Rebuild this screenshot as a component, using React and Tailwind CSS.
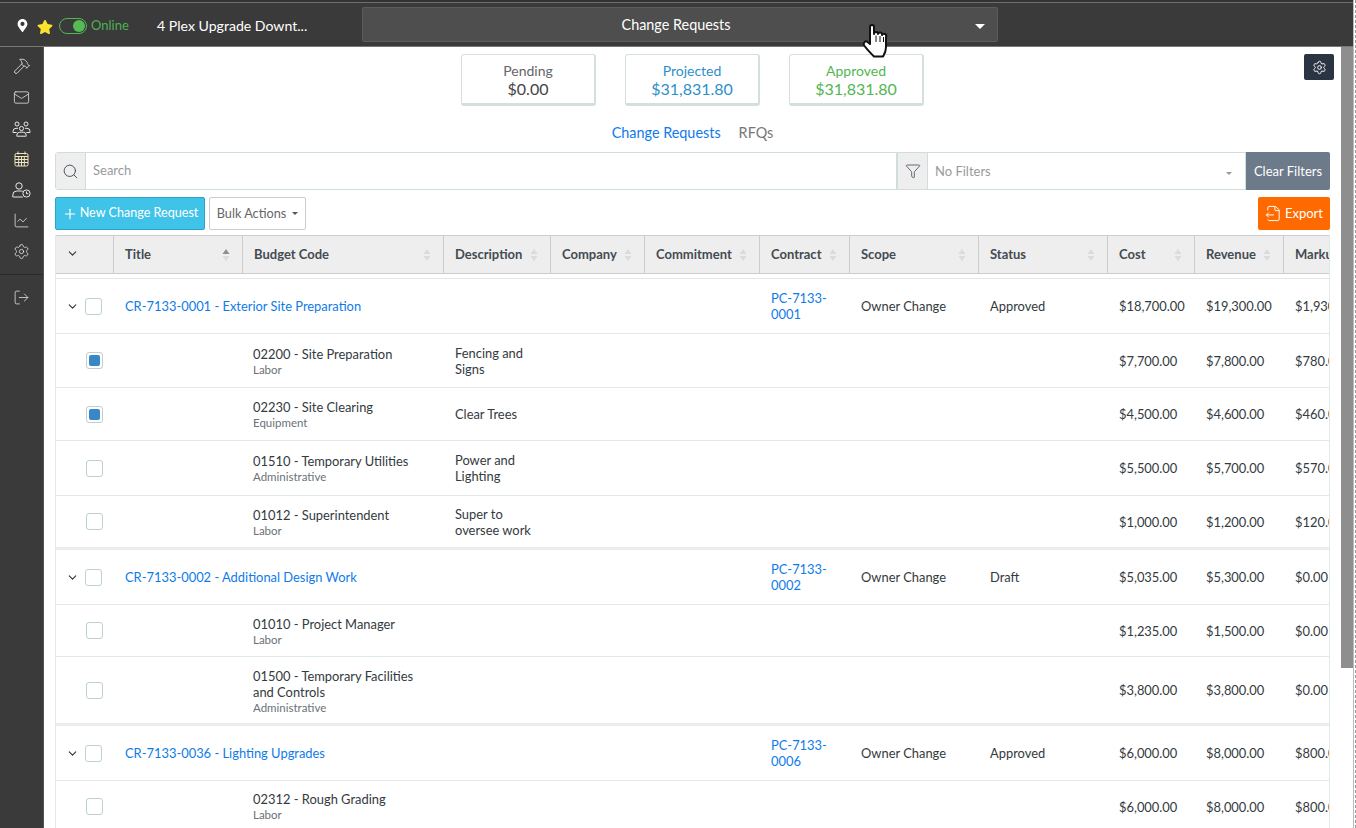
import React from "react";
import { Hammer, Mail, ChartLine, Settings, LogOut, Search, Filter, Plus, ChevronDown, FileOutput } from "lucide-react";
import { FaMapMarkerAlt, FaStar } from "react-icons/fa";

const cols = "grid grid-cols-[58px_129px_201px_107px_94px_115px_90px_129px_129px_87px_89px_110px]";

function Sort({ active }) {
  return (
    <svg width="8" height="14" viewBox="0 0 8 14" className="shrink-0">
      <path d="M4 1 L7.5 6 H0.5 Z" fill={active ? "#8f8f8f" : "#dcdcd6"} />
      <path d="M4 13 L7.5 8 H0.5 Z" fill="#dcdcd6" />
    </svg>
  );
}

function Box({ checked }) {
  return (
    <span className="w-[17px] h-[17px] rounded-[3px] border border-[#bcd0cd] bg-white flex items-center justify-center shrink-0">
      {checked && <span className="w-[11px] h-[11px] rounded-[2px] bg-[#3a87c8]" />}
    </span>
  );
}

const heads = [
  ["Title", true], ["Budget Code"], ["Description"], ["Company"], ["Commitment"], ["Contract"], ["Scope"], ["Status"], ["Cost"], ["Revenue"],
];

function Amounts({ c, r, m }) {
  return (
    <>
      <div className="pl-[11px] pt-[2px] text-[#333a40]">{c}</div>
      <div className="pl-[11px] pt-[2px] text-[#333a40]">{r}</div>
      <div className="pl-[11px] pt-[2px] text-[#333a40] whitespace-nowrap">{m}</div>
    </>
  );
}

function Parent({ h, title, pc, status, c, r, m }) {
  return (
    <div className={`${cols} items-center border-b border-[#dfeae8] ${h}`}>
      <div className="flex items-center gap-[6px] pl-[10px]">
        <ChevronDown size={13} strokeWidth={2} className="text-[#333]" />
        <Box />
      </div>
      <div className="col-span-5 pl-[11px] pt-[2px] text-[#0f7bea]">{title}</div>
      <div className="pl-[11px] text-[#0f7bea] leading-[16px] pr-[8px]">{pc}</div>
      <div className="pl-[11px] pt-[2px] text-[#333a40]">Owner Change</div>
      <div className="pl-[11px] pt-[2px] text-[#333a40]">{status}</div>
      <Amounts c={c} r={r} m={m} />
    </div>
  );
}

function Child({ h, checked, code, type, desc, c, r, m, last, low }) {
  return (
    <div className={`${cols} items-center ${last ? "border-b-[3px] border-[#ececec]" : "border-b border-[#dfeae8]"} ${h}`}>
      <div className="pl-[30px]"><Box checked={checked} /></div>
      <div />
      <div className={`pl-[10px] text-[#333a40] leading-[16px] ${low ? "pt-[2px]" : ""}`}>
        <div>{code}</div>
        <div className="text-[11.5px] leading-[15px] text-[#6b7278]">{type}</div>
      </div>
      <div className="pl-[11px] text-[#333a40] leading-[16px] pr-[10px]">{desc}</div>
      <div /><div /><div /><div /><div />
      <Amounts c={c} r={r} m={m} />
    </div>
  );
}

function People() {
  return (
    <svg width="19" height="16" viewBox="0 0 19 16" fill="none" stroke="currentColor" strokeWidth="1">
      <circle cx="5" cy="3" r="2" /><circle cx="14" cy="3" r="2" /><circle cx="9.5" cy="7.5" r="2.1" />
      <path d="M1 11.5v-1.2a3 3 0 0 1 3-3h2" />
      <path d="M18 11.5v-1.2a3 3 0 0 0-3-3h-2" />
      <path d="M1 11.5h3.6" /><path d="M18 11.5h-3.6" />
      <path d="M4.8 15.2v-1a3 3 0 0 1 3-3h3.4a3 3 0 0 1 3 3v1z" />
    </svg>
  );
}

function UserClock() {
  return (
    <svg width="19" height="16" viewBox="0 0 19 16" fill="none" stroke="currentColor" strokeWidth="1">
      <circle cx="7" cy="4" r="3.2" />
      <path d="M0.8 15v-2a4 4 0 0 1 4-4h4.5a4 4 0 0 1 1.5.4M0.8 15h10" />
      <circle cx="14.5" cy="11.5" r="3.6" />
      <path d="M14.5 9.5v2.2h1.8" />
    </svg>
  );
}

function GridCalendar() {
  return (
    <svg width="15" height="16" viewBox="0 0 15 16" fill="none" stroke="#f0e6c0" strokeWidth="1">
      <rect x="1" y="2.5" width="13" height="12.5" rx="1.5" />
      <path d="M4 0.5v3M11 0.5v3M1 5.5h13M1 8.5h13M1 11.5h13M4.7 5.5V15M7.5 5.5V15M10.3 5.5V15" />
    </svg>
  );
}

function Hand() {
  return (
    <svg width="27" height="35" viewBox="0 0 27 35" className="absolute left-[862px] top-[24px] z-10">
      <path
        d="M8 3 a2 2 0 0 1 4 0 V10 a2 2 0 0 1 4 0 a2 2 0 0 1 4 1 a2 2 0 0 1 4 2 V23 C24 28 22.5 30 21 32.5 H12 C9 29.5 5 25.5 2.2 21.5 C0.8 19 3.4 16 5.6 18 L8 20 Z"
        fill="#fff" stroke="#111" strokeWidth="2" strokeLinejoin="round"
      />
      <path d="M14 11.5V18M18 12V18M21.5 13V18" stroke="#111" strokeWidth="1" />
    </svg>
  );
}

function Card({ label, value, labelC, valueC }) {
  return (
    <div className="w-[135px] h-[52px] rounded-[3px] border border-[#d5e0de] border-b-[3px] border-r-2 flex flex-col items-center pt-[8px]">
      <div className={`text-[14px] leading-[16px] ${labelC}`}>{label}</div>
      <div className={`text-[16px] leading-[20px] ${valueC}`}>{value}</div>
    </div>
  );
}

export default function App() {
  return (
    <div className="relative h-[828px] w-[1356px] overflow-hidden bg-white flex flex-col text-[12.9px] font-['Lato','Liberation_Sans',sans-serif]">
      <Hand />
      <div className="absolute right-0 top-0 bottom-0 w-[3px] bg-white border-l border-[#bbbbbb]">
        <div className="h-full ml-[1px] w-[1px] border-l border-dashed border-[#999]" />
      </div>
      <header className="h-[47px] shrink-0 bg-[#3a3a3a] pt-[5px] shadow-[inset_0_2px_0_#333333,inset_0_3px_0_#6f6f6f] border-b border-b-[#777] flex items-center">
        <FaMapMarkerAlt size={13} className="ml-[16px] text-white shrink-0" />
        <FaStar size={16} className="ml-[8px] mt-[2px] text-[#fbe32d] shrink-0" />
        <span className="ml-[6px] w-[28px] h-[16px] rounded-full border border-[#4fb84f] flex items-center justify-end pr-[1px]">
          <span className="w-[12px] h-[12px] rounded-full bg-[#55bb55]" />
        </span>
        <span className="ml-[4px] w-[38px] text-[13px] text-[#4fb050]">Online</span>
        <span className="ml-[28px] w-[205px] text-[14.1px] text-white">4 Plex Upgrade Downt...</span>
        <div className="relative w-[636px] h-[35px] -mt-[2px] pr-[8px] rounded-[2px] bg-[#4e4e4e] border border-[#5c5c5c] flex items-center justify-center text-[14.4px] text-white">
          Change Requests
          <span className="absolute right-[12px] top-[16px] border-x-[5px] border-x-transparent border-t-[5px] border-t-white" />
        </div>
      </header>
      <div className="flex flex-1 min-h-0">
        <aside className="w-[44px] shrink-0 bg-[#3a3a3a] border-r border-[#555] text-[#e8e8e8] flex flex-col items-center pt-[10px]">
          <div className="flex flex-col items-center gap-[11px]">
            <Hammer size={18} strokeWidth={1.1} />
            <div className="h-[20px] mt-[1px] flex items-center"><Mail size={17} strokeWidth={1.1} /></div>
            <div className="h-[20px] mt-[1px] flex items-center"><People /></div>
            <div className="h-[20px] -mt-[1px] flex items-center"><GridCalendar /></div>
            <div className="h-[20px] flex items-center"><UserClock /></div>
            <div className="h-[20px] -mt-[1px] flex items-center"><ChartLine size={17} strokeWidth={1.1} /></div>
            <div className="h-[20px] flex items-center"><Settings size={17} strokeWidth={1.1} /></div>
          </div>
          <div className="w-full border-t border-[#2a2a2a] mt-[13px] pt-[14px] flex justify-center">
            <LogOut size={17} strokeWidth={1.1} />
          </div>
        </aside>
        <main className="relative w-[1297px] shrink-0 min-h-0 overflow-hidden pl-[11px] pr-[11px] pt-[7px]">
          <button className="absolute right-[7px] top-[7px] w-[30px] h-[26px] rounded-[2px] bg-[#2b3442] text-white flex items-center justify-center">
            <Settings size={15} strokeWidth={1.5} />
          </button>
          <div className="flex justify-center gap-[29px]">
            <Card label="Pending" value="$0.00" labelC="text-[#666]" valueC="text-[#444]" />
            <Card label="Projected" value="$31,831.80" labelC="text-[#2e8fc9]" valueC="text-[#2e8fc9]" />
            <Card label="Approved" value="$31,831.80" labelC="text-[#52b652]" valueC="text-[#52b652]" />
          </div>
          <div className="flex justify-center gap-[18px] mt-[18px] text-[14.4px] leading-[17px]">
            <span className="text-[#0f7bea]">Change Requests</span>
            <span className="text-[#777]">RFQs</span>
          </div>
          <div className="mt-[11px] flex h-[38px] w-[1275px]">
            <div className="w-[842px] flex border border-[#cfdddb] rounded-l-[3px]">
              <div className="w-[30px] bg-[#eeeeee] border-r border-[#cfdddb] flex items-center justify-center text-[#3f4854]">
                <Search size={17} strokeWidth={1.3} />
              </div>
              <div className="flex items-center pl-[7px] text-[#9a9a9a] text-[13px]">Search</div>
            </div>
            <div className="w-[349px] flex border border-l-0 border-[#cfdddb]">
              <div className="w-[31px] bg-[#eeeeee] border-x border-[#cfdddb] flex items-center justify-center text-[#3f4854]">
                <Filter size={16} strokeWidth={1.2} />
              </div>
              <div className="relative flex-1 flex items-center pl-[7px] pt-[2px] text-[#9a9a9a] text-[13px]">
                No Filters
                <span className="absolute right-[13px] top-[19px] border-x-[3px] border-x-transparent border-t-[3px] border-t-[#999]" />
              </div>
            </div>
            <div className="w-[84px] pt-[2px] bg-[#6c7a89] rounded-r-[2px] text-white text-[13px] flex items-center justify-center">Clear Filters</div>
          </div>
          <div className="mt-[7px] flex items-stretch h-[33px] w-[1275px]">
            <button className="w-[150px] rounded-[2px] bg-[#3fc3e8] border border-[#2aa5c9] text-white text-[12.6px] flex items-center justify-center gap-[2px]">
              <Plus size={16} strokeWidth={1.7} />New Change Request
            </button>
            <button className="ml-[4px] w-[97px] rounded-[2px] border border-[#cccccc] text-[#666] text-[12.7px] flex items-center justify-center gap-[6px]">
              Bulk Actions
              <span className="border-x-[3px] border-x-transparent border-t-[3px] border-t-[#555]" />
            </button>
            <button className="ml-auto w-[72px] rounded-[2px] bg-[#ff6a00] text-white text-[13px] flex items-center justify-center gap-[3px]">
              <FileOutput size={17} strokeWidth={1.4} />Export
            </button>
          </div>
          <div className="mt-[5px] w-[1275px] overflow-hidden border-x border-[#dfeae8]">
            <div className={`${cols} h-[39px] bg-[#eeeeee] border-y border-[#cccccc] items-center font-bold text-[13px] text-[#444b52]`}>
              <div className="h-full border-r border-[#cccccc] pl-[10px] flex items-center">
                <ChevronDown size={13} strokeWidth={2} className="text-[#333] -mt-[3px]" />
              </div>
              {heads.map(([t, a]) => (
                <div key={t} className="h-full border-r border-[#cccccc] pl-[11px] pr-[12px] flex items-center justify-between whitespace-nowrap">
                  <span>{t}</span><Sort active={a} />
                </div>
              ))}
              <div className="pl-[11px] whitespace-nowrap">Markup</div>
            </div>
            <div className="h-[5px] border-b border-[#dfeae8]" />
            <Parent h="h-[55px]" title="CR-7133-0001 - Exterior Site Preparation" pc="PC-7133-0001" status="Approved" c="$18,700.00" r="$19,300.00" m="$1,930.00" />
            <Child h="h-[54px]" low checked code="02200 - Site Preparation" type="Labor" desc="Fencing and Signs" c="$7,700.00" r="$7,800.00" m="$780.00" />
            <Child h="h-[53px]" checked code="02230 - Site Clearing" type="Equipment" desc="Clear Trees" c="$4,500.00" r="$4,600.00" m="$460.00" />
            <Child h="h-[55px]" code="01510 - Temporary Utilities" type="Administrative" desc="Power and Lighting" c="$5,500.00" r="$5,700.00" m="$570.00" />
            <Child h="h-[54px]" low last code="01012 - Superintendent" type="Labor" desc="Super to oversee work" c="$1,000.00" r="$1,200.00" m="$120.00" />
            <Parent h="h-[55px]" title="CR-7133-0002 - Additional Design Work" pc="PC-7133-0002" status="Draft" c="$5,035.00" r="$5,300.00" m="$0.00" />
            <Child h="h-[52px]" low code="01010 - Project Manager" type="Labor" c="$1,235.00" r="$1,500.00" m="$0.00" />
            <Child h="h-[69px]" low last code={<>01500 - Temporary Facilities<br />and Controls</>} type="Administrative" c="$3,800.00" r="$3,800.00" m="$0.00" />
            <Parent h="h-[55px]" title="CR-7133-0036 - Lighting Upgrades" pc="PC-7133-0006" status="Approved" c="$6,000.00" r="$8,000.00" m="$800.00" />
            <Child h="h-[52px]" code="02312 - Rough Grading" type="Labor" c="$6,000.00" r="$8,000.00" m="$800.00" />
          </div>
        </main>
        <div className="w-[15px] shrink-0 bg-white flex flex-col">
          <div className="w-[12px] h-[621px] bg-[#8e8e8e]" />
        </div>
      </div>
    </div>
  );
}
